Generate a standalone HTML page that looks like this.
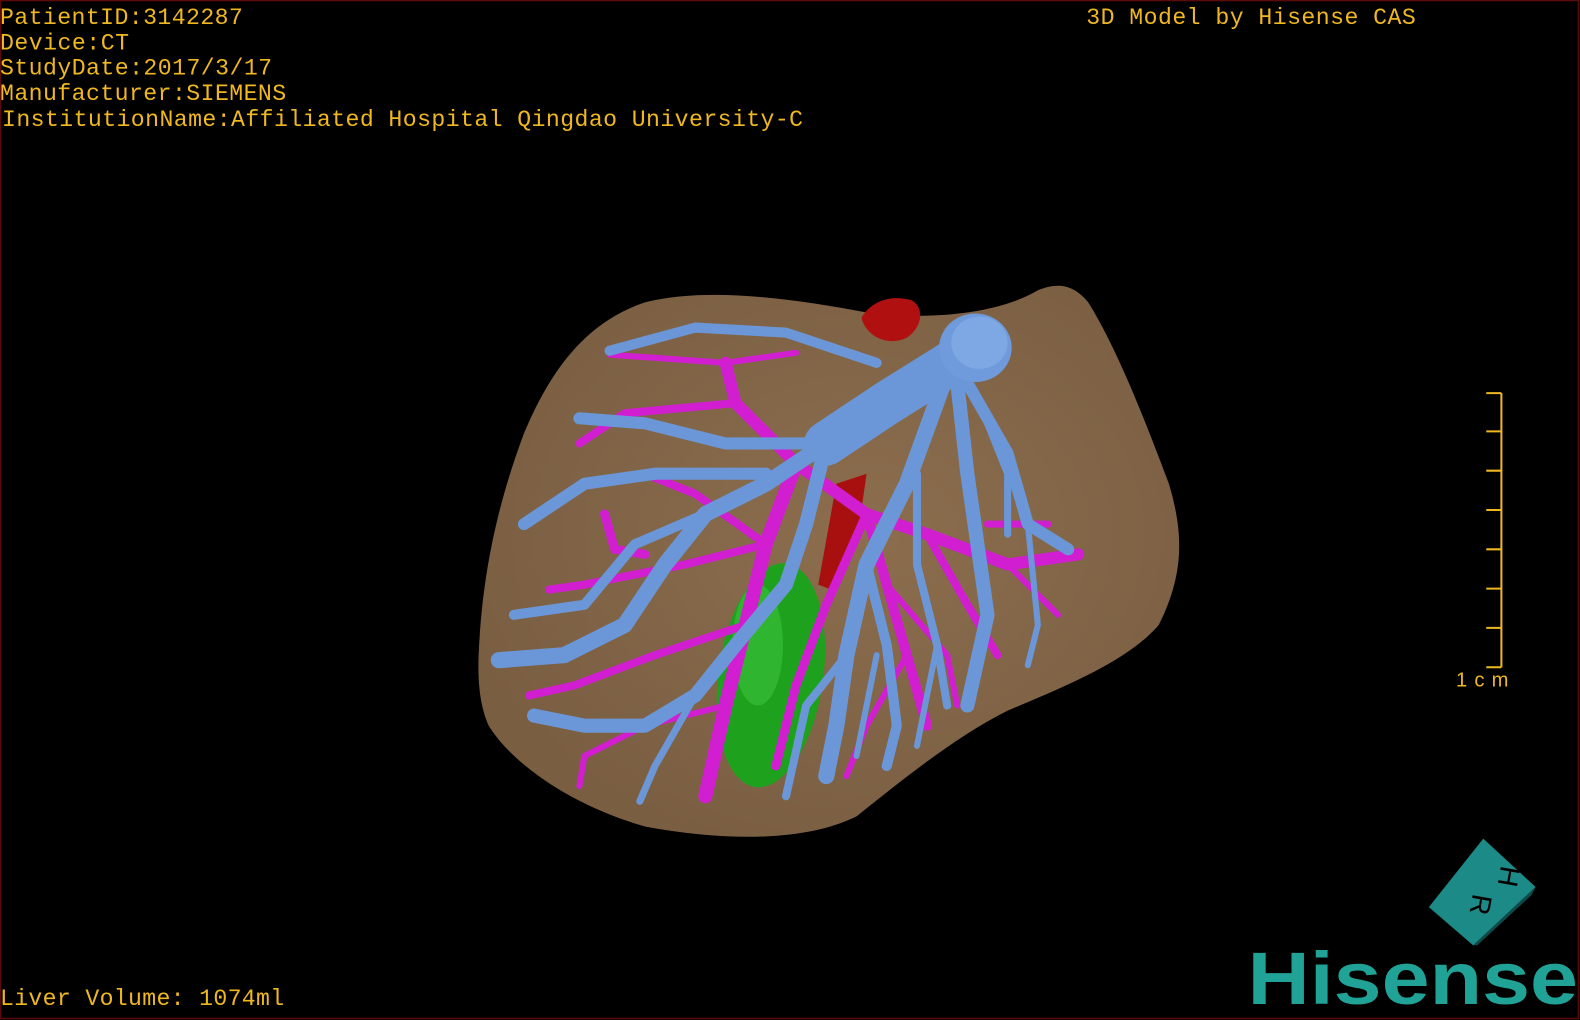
<!DOCTYPE html>
<html><head><meta charset="utf-8"><style>
html,body{margin:0;padding:0;background:#000;width:1580px;height:1020px;overflow:hidden}
svg{display:block}
</style></head><body>
<svg width="1580" height="1020" viewBox="0 0 1568 1012" preserveAspectRatio="none" xmlns="http://www.w3.org/2000/svg">
<rect x="0" y="0" width="1568" height="1012" fill="#000"/>
<rect x="0.5" y="0.5" width="1566" height="1010" fill="none" stroke="#5a0a0a" stroke-width="1.5"/>
<defs>
<radialGradient id="lg" cx="0.55" cy="0.45" r="0.6">
<stop offset="0" stop-color="#8c6e4e"/><stop offset="1" stop-color="#7a5e42"/>
</radialGradient>
</defs>
<path d="M475,650 C478,580 490,510 520,430 C545,370 580,320 640,300 C700,285 780,295 860,310 C920,318 990,312 1030,288 C1050,280 1065,282 1080,300 C1105,340 1130,400 1160,480 C1175,530 1175,570 1150,620 C1120,655 1060,680 1000,705 C950,730 900,770 850,810 C800,835 720,835 640,820 C570,800 510,760 485,720 C476,700 474,675 475,650 Z" fill="url(#lg)"/>
<path d="M855,315 C865,298 885,292 905,298 C918,306 915,325 900,335 C880,345 858,332 855,315 Z" fill="#b01010"/>
<path d="M830,480 L860,470 L850,540 L825,585 L812,580 Z" fill="#a81010"/>
<ellipse cx="765" cy="670" rx="52" ry="112" fill="#1ea21e" transform="rotate(8 765 670)"/>
<ellipse cx="752" cy="640" rx="25" ry="60" fill="#3cc23c" opacity="0.6"/>
<g stroke="#d01ed0" fill="none" stroke-linecap="round" stroke-linejoin="round">
<path d="M790,460 L760,540 L740,620 L720,700 L700,790" stroke-width="14"/>
<path d="M790,460 L730,400 L720,360" stroke-width="12"/>
<path d="M730,400 L620,410 L575,440" stroke-width="8"/>
<path d="M720,360 L650,355 L605,352" stroke-width="6"/>
<path d="M720,360 L790,350" stroke-width="6"/>
<path d="M760,540 L690,490 L640,470" stroke-width="8"/>
<path d="M760,540 L680,560 L580,580 L545,585" stroke-width="8"/>
<path d="M740,620 L650,650 L570,680 L525,690" stroke-width="8"/>
<path d="M720,700 L640,720 L580,750 L575,780" stroke-width="6"/>
<path d="M600,510 L610,545 L640,550" stroke-width="9"/>
<path d="M790,460 L860,510 L920,530 L1000,560 L1070,550" stroke-width="12"/>
<path d="M860,510 L880,580 L900,650 L920,720" stroke-width="10"/>
<path d="M920,530 L960,600 L990,650" stroke-width="8"/>
<path d="M1000,560 L1040,600 L1050,610" stroke-width="6"/>
<path d="M860,510 L820,600 L790,680 L770,760" stroke-width="9"/>
<path d="M880,580 L940,650 L950,700" stroke-width="6"/>
<path d="M900,650 L860,720 L840,770" stroke-width="6"/>
<path d="M980,520 L1040,520" stroke-width="7"/>
</g>
<g stroke="#6b97d8" fill="none" stroke-linecap="round" stroke-linejoin="round">
<path d="M960,350 L880,400 L820,440" stroke-width="44"/>
<path d="M820,440 L720,440 L640,420 L575,415" stroke-width="12"/>
<path d="M870,360 L780,330 L690,325 L605,348" stroke-width="10"/>
<path d="M820,440 L760,480 L700,510 L660,560 L620,620 L560,650 L495,655" stroke-width="16"/>
<path d="M760,470 L650,470 L580,480 L520,520" stroke-width="12"/>
<path d="M700,510 L630,540 L580,600 L510,610" stroke-width="10"/>
<path d="M820,440 L800,520 L780,580 L730,640 L690,690 L640,720 L580,720 L530,710" stroke-width="14"/>
<path d="M690,690 L650,760 L635,795" stroke-width="7"/>
<path d="M940,370 L900,480 L860,560 L840,650 L830,720 L820,770" stroke-width="16"/>
<path d="M950,380 L960,470 L970,540 L980,610 L960,700" stroke-width="14"/>
<path d="M960,380 L1000,450 L1020,520 L1060,545" stroke-width="12"/>
<path d="M860,560 L880,640 L890,720 L880,760" stroke-width="10"/>
<path d="M840,650 L800,700 L780,790" stroke-width="8"/>
<path d="M910,470 L910,560 L930,640 L940,700" stroke-width="8"/>
<path d="M980,420 L1000,470 L1000,530" stroke-width="7"/>
<path d="M1020,520 L1030,620 L1020,660" stroke-width="6"/>
<path d="M870,650 L850,750" stroke-width="6"/>
<path d="M930,640 L910,740" stroke-width="6"/>
</g>
<ellipse cx="968" cy="345" rx="36" ry="34" fill="#6f9bdc"/>
<ellipse cx="972" cy="340" rx="28" ry="26" fill="#7ea8e4"/>
<g stroke="#f0b820" stroke-width="2" fill="none">
<path d="M1490,390 L1490,662"/>
<path d="M1475,390 L1490,390 M1475,428 L1490,428 M1475,467 L1490,467 M1475,506 L1490,506 M1475,545 L1490,545 M1475,584 L1490,584 M1475,623 L1490,623 M1475,662 L1490,662"/>
</g>
<g font-family="Liberation Mono, monospace" font-size="23" fill="#f0b820">
<text x="1445" y="681" font-family="Liberation Sans, sans-serif" font-size="20" textLength="52">1cm</text>
<text x="0" y="24" textLength="241">PatientID:3142287</text>
<text x="0" y="49" textLength="128">Device:CT</text>
<text x="0" y="74" textLength="270">StudyDate:2017/3/17</text>
<text x="0" y="99" textLength="284">Manufacturer:SIEMENS</text>
<text x="2" y="125" textLength="795">InstitutionName:Affiliated Hospital Qingdao University-C</text>
<text x="1078" y="24" textLength="327">3D Model by Hisense CAS</text>
<text x="0" y="997" textLength="282">Liver Volume: 1074ml</text>
</g>
<path d="M1418,900 L1472,832 L1524,880 L1462,938 Z" fill="#1c8a86"/>
<path d="M1462,938 L1524,880 L1520,888 L1466,938 Z" fill="#0e4a48"/>
<g font-family="Liberation Sans, sans-serif" font-size="28" fill="#000" text-anchor="middle">
<text x="0" y="0" transform="translate(1488,868) rotate(100)">H</text>
<text x="0" y="0" transform="translate(1460,896) rotate(100)">R</text>
</g>
<text x="1238" y="996" font-family="Liberation Sans, sans-serif" font-weight="bold" font-size="74" fill="#20a396" textLength="328" lengthAdjust="spacingAndGlyphs">Hisense</text>
</svg>
</body></html>
